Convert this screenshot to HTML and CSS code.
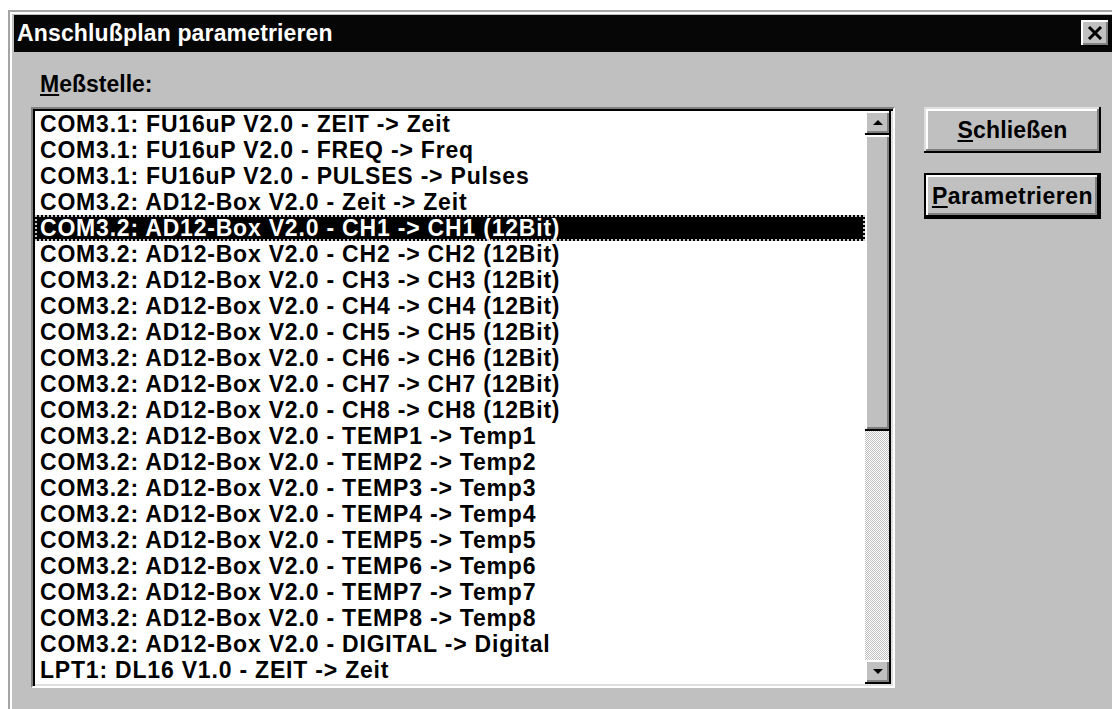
FILE: index.html
```html
<!DOCTYPE html>
<html lang="de">
<head>
<meta charset="utf-8">
<title>Anschlußplan parametrieren</title>
<link rel="stylesheet" href="styles.css">
</head>
<body>
<div class="window">
  <div class="titlebar">
    <span class="title">Anschlußplan parametrieren</span>
    <button class="close-btn" type="button" aria-label="Schließen">
      <svg width="16" height="14" viewBox="0 0 16 14"><path d="M2 1 L14 13 M14 1 L2 13" stroke="#000" stroke-width="3" fill="none"/></svg>
    </button>
  </div>
  <div class="client">
    <div class="field-label"><u>M</u>eßstelle:</div>
    <div class="listbox">
      <ul class="items">
        <li>COM3.1: FU16uP V2.0 - ZEIT -&gt; Zeit</li>
        <li>COM3.1: FU16uP V2.0 - FREQ -&gt; Freq</li>
        <li>COM3.1: FU16uP V2.0 - PULSES -&gt; Pulses</li>
        <li>COM3.2: AD12-Box V2.0 - Zeit -&gt; Zeit</li>
        <li class="selected">COM3.2: AD12-Box V2.0 - CH1 -&gt; CH1 (12Bit)</li>
        <li>COM3.2: AD12-Box V2.0 - CH2 -&gt; CH2 (12Bit)</li>
        <li>COM3.2: AD12-Box V2.0 - CH3 -&gt; CH3 (12Bit)</li>
        <li>COM3.2: AD12-Box V2.0 - CH4 -&gt; CH4 (12Bit)</li>
        <li>COM3.2: AD12-Box V2.0 - CH5 -&gt; CH5 (12Bit)</li>
        <li>COM3.2: AD12-Box V2.0 - CH6 -&gt; CH6 (12Bit)</li>
        <li>COM3.2: AD12-Box V2.0 - CH7 -&gt; CH7 (12Bit)</li>
        <li>COM3.2: AD12-Box V2.0 - CH8 -&gt; CH8 (12Bit)</li>
        <li>COM3.2: AD12-Box V2.0 - TEMP1 -&gt; Temp1</li>
        <li>COM3.2: AD12-Box V2.0 - TEMP2 -&gt; Temp2</li>
        <li>COM3.2: AD12-Box V2.0 - TEMP3 -&gt; Temp3</li>
        <li>COM3.2: AD12-Box V2.0 - TEMP4 -&gt; Temp4</li>
        <li>COM3.2: AD12-Box V2.0 - TEMP5 -&gt; Temp5</li>
        <li>COM3.2: AD12-Box V2.0 - TEMP6 -&gt; Temp6</li>
        <li>COM3.2: AD12-Box V2.0 - TEMP7 -&gt; Temp7</li>
        <li>COM3.2: AD12-Box V2.0 - TEMP8 -&gt; Temp8</li>
        <li>COM3.2: AD12-Box V2.0 - DIGITAL -&gt; Digital</li>
        <li>LPT1: DL16 V1.0 - ZEIT -&gt; Zeit</li>
      </ul>
      <div class="scrollbar">
        <div class="sb-btn"><span class="arrow-up"></span></div>
        <div class="sb-track"><div class="sb-thumb"></div></div>
        <div class="sb-btn"><span class="arrow-down"></span></div>
      </div>
    </div>
    <div class="actions">
      <button class="btn" type="button"><u>S</u>chließen</button>
      <button class="btn btn-default" type="button"><u>P</u>arametrieren</button>
    </div>
  </div>
</div>
</body>
</html>
```

FILE: styles.css
```css
html, body {
  margin: 0;
  padding: 0;
  background: #fff;
}

body {
  font-family: "Liberation Sans", Arial, sans-serif;
  font-weight: bold;
  font-size: 23px;
  color: #000;
  overflow: hidden;
}

/* dialog frame, clipped by the right and bottom edges of the screen */
.window {
  margin: 10px 0 0 8px;
  width: 1104px;
  height: 699px;
  box-sizing: border-box;
  background: #c0c0c0;
  border-top: 2px solid #a4a4a4;
  border-left: 2px solid #a4a4a4;
  box-shadow: inset 2px 2px 0 #fff;
  padding: 3px 0 0 4px;
  overflow: hidden;
}

.titlebar {
  height: 37px;
  background: #060606;
  display: flex;
  align-items: center;
  justify-content: space-between;
  padding: 0 2px 0 3px;
}

.title {
  color: #fff;
  letter-spacing: 0.15px;
  white-space: nowrap;
}

.close-btn {
  width: 29px;
  height: 27px;
  padding: 0;
  border: 0;
  background: #c0c0c0;
  box-shadow: inset -2px -2px 0 #000, inset 2px 2px 0 #fff, inset -4px -4px 0 #808080;
  display: flex;
  align-items: center;
  justify-content: center;
}

.close-btn svg {
  display: block;
  margin: -1px 0 0 -1px;
}

.client {
  display: grid;
  grid-template-columns: 864px 177px;
  column-gap: 29px;
  row-gap: 10px;
  padding: 19px 0 0 17px;
}

.field-label {
  grid-column: 1;
  line-height: 27px;
  height: 26px;
  padding-left: 9px;
}

u {
  text-decoration-thickness: 2px;
  text-underline-offset: 2px;
}

/* sunken list box */
.listbox {
  grid-column: 1;
  grid-row: 2;
  width: 864px;
  height: 581px;
  box-sizing: border-box;
  border: 2px solid;
  border-color: #808080 #fff #fff #808080;
  background: #fff;
  box-shadow: inset 2px 2px 0 #000, inset -2px -2px 0 #dfdfdf;
  padding: 2px;
  display: flex;
}

.items {
  flex: 1;
  list-style: none;
  margin: 0;
  padding: 0;
  background: #fff;
  overflow: hidden;
}

.items li {
  height: 26px;
  line-height: 27px;
  padding-left: 5px;
  white-space: nowrap;
  letter-spacing: 0.8px;
}

.items li.selected {
  background: #000;
  color: #fff;
  outline: 2px dotted #c8c8c8;
  outline-offset: -2px;
}

/* vertical scroll bar */
.scrollbar {
  width: 24px;
  border-right: 2px solid #000;
  display: flex;
  flex-direction: column;
}

.sb-btn {
  height: 24px;
  flex: none;
  background: #c0c0c0;
  box-shadow: inset 0 -2px 0 #000, inset 2px 2px 0 #fff, inset -2px -4px 0 #808080;
  display: flex;
  align-items: center;
  justify-content: center;
}

.arrow-up,
.arrow-down {
  width: 0;
  height: 0;
  border-left: 5px solid transparent;
  border-right: 5px solid transparent;
  margin-left: 1px;
}

.arrow-up {
  border-bottom: 5px solid #000;
  margin-top: -2px;
}

.arrow-down {
  border-top: 5px solid #000;
  margin-top: -1px;
}

.sb-track {
  flex: 1;
  background: repeating-conic-gradient(#fff 0 25%, #c0c0c0 0 50%) 0 0 / 2px 2px;
}

.sb-thumb {
  height: 296px;
  background: #c0c0c0;
  box-shadow: inset 0 -2px 0 #000, inset 2px 2px 0 #fff, inset -2px -4px 0 #808080;
}

/* dialog buttons */
.actions {
  grid-column: 2;
  grid-row: 2;
  align-self: start;
  display: flex;
  flex-direction: column;
  gap: 20px;
}

.btn {
  width: 177px;
  height: 46px;
  padding: 0;
  border: 0;
  background: #c0c0c0;
  font: inherit;
  color: #000;
  letter-spacing: 0.15px;
  box-shadow: inset -2px -2px 0 #000, inset 2px 2px 0 #dfdfdf, inset -4px -4px 0 #808080, inset 4px 4px 0 #fff;
}

.btn-default {
  box-shadow: inset 0 0 0 2px #000, inset -4px -4px 0 #000, inset 4px 4px 0 #fff, inset -6px -6px 0 #808080;
  letter-spacing: 0.5px;
}
```
